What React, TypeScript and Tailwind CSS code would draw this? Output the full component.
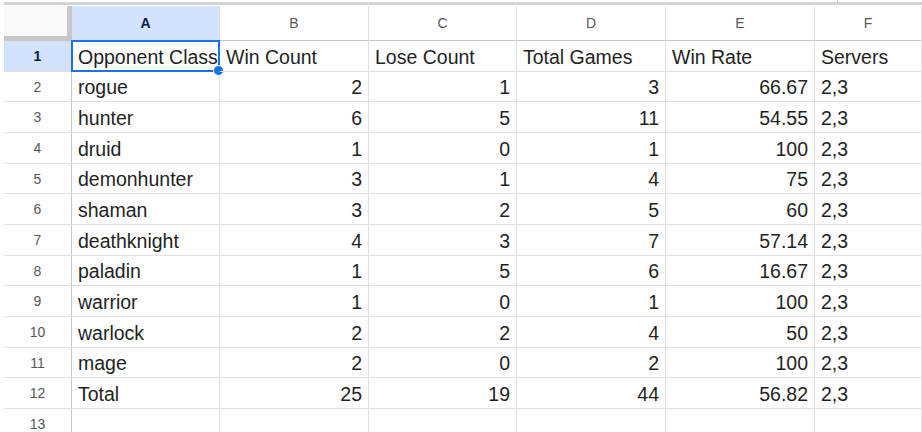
import React from "react";

interface rowType {
  name: string;
  win: number;
  lose: number;
  total: number;
  rate: string;
  servers: string;
}

const rows: rowType[] = [
  { name: "rogue", win: 2, lose: 1, total: 3, rate: "66.67", servers: "2,3" },
  { name: "hunter", win: 6, lose: 5, total: 11, rate: "54.55", servers: "2,3" },
  { name: "druid", win: 1, lose: 0, total: 1, rate: "100", servers: "2,3" },
  { name: "demonhunter", win: 3, lose: 1, total: 4, rate: "75", servers: "2,3" },
  { name: "shaman", win: 3, lose: 2, total: 5, rate: "60", servers: "2,3" },
  { name: "deathknight", win: 4, lose: 3, total: 7, rate: "57.14", servers: "2,3" },
  { name: "paladin", win: 1, lose: 5, total: 6, rate: "16.67", servers: "2,3" },
  { name: "warrior", win: 1, lose: 0, total: 1, rate: "100", servers: "2,3" },
  { name: "warlock", win: 2, lose: 2, total: 4, rate: "50", servers: "2,3" },
  { name: "mage", win: 2, lose: 0, total: 2, rate: "100", servers: "2,3" },
  { name: "Total", win: 25, lose: 19, total: 44, rate: "56.82", servers: "2,3" },
];

// row heights alternate so 12 rows come out at 368px like the screenshot
const heights = ["h-[31px]", "h-[30px]", "h-[31px]"];

const colWidths = ["w-[148px]", "w-[149px]", "w-[148px]", "w-[149px]", "w-[149px]", "flex-1"];
const letters = ["A", "B", "C", "D", "E", "F"];

const RowHeader = ({ n, active }: { n: number; active?: boolean }) => (
  <div
    className={`w-[68px] shrink-0 flex items-center justify-center border-r border-r-[#c7c7c7] border-b border-b-[#e1e1e1] text-[14px] ${
      active ? "bg-[#d3e3fd] font-bold text-[#041e49]" : "bg-white text-[#575757]"
    }`}
  >
    {n}
  </div>
);

const Cell = ({ idx, children, right }: { idx: number; children?: React.ReactNode; right?: boolean }) => (
  <div
    className={`${colWidths[idx]} shrink-0 flex items-end pb-[4px] px-[6px] border-r border-b border-[#e1e1e1] whitespace-nowrap overflow-visible ${
      right ? "justify-end" : "justify-start"
    }`}
  >
    {children}
  </div>
);

const App = () => {
  const header = ["Opponent Class", "Win Count", "Lose Count", "Total Games", "Win Rate", "Servers"];

  return (
    <div
      className="w-[922px] h-[432px] overflow-hidden bg-white pl-[4px] text-[#1f1f1f]"
      style={{ fontFamily: '"Liberation Sans", Arial, sans-serif' }}
    >
      {/* top bar line */}
      <div className="h-[6px] relative">
        <div className="absolute left-0 right-0 top-[2px] h-[3px] bg-[#d4d4d4]" />
        <div className="absolute left-[833px] top-0 h-[3px] w-px bg-[#c7c7c7]" />
      </div>

      {/* column letters */}
      <div className="flex h-[35px]">
        <div className="w-[68px] shrink-0 bg-[#f8f9fa] border-r-[5px] border-b-[5px] border-[#c7c7c7]" />
        {letters.map((l, i) => (
          <div
            key={l}
            className={`${colWidths[i]} shrink-0 flex items-center justify-center border-r border-r-[#e1e1e1] border-b border-b-[#c7c7c7] text-[14px] ${
              i === 0 ? "bg-[#d3e3fd] font-bold text-[#041e49]" : "bg-white text-[#575757]"
            }`}
          >
            {l}
          </div>
        ))}
      </div>

      <div className="text-[19.5px] leading-none">
        {/* row 1 headers */}
        <div className={`flex ${heights[0]}`}>
          <RowHeader n={1} active />
          {header.map((h, i) => (
            <div
              key={h}
              className={`${colWidths[i]} shrink-0 relative flex items-end pb-[4px] px-[6px] border-r border-b border-[#e1e1e1] whitespace-nowrap`}
            >
              {h}
              {i === 0 && (
                <div className="absolute -left-px -top-px -right-px -bottom-px border-2 border-[#1a73e8] pointer-events-none">
                  <div className="absolute -right-[6px] -bottom-[6px] w-[11px] h-[11px] rounded-full bg-[#1a73e8] border border-white" />
                </div>
              )}
            </div>
          ))}
        </div>

        {rows.map((r, i) => (
          <div key={r.name} className={`flex ${heights[(i + 1) % 3]}`}>
            <RowHeader n={i + 2} />
            <Cell idx={0}>{r.name}</Cell>
            <Cell idx={1} right>{r.win}</Cell>
            <Cell idx={2} right>{r.lose}</Cell>
            <Cell idx={3} right>{r.total}</Cell>
            <Cell idx={4} right>{r.rate}</Cell>
            <Cell idx={5}>{r.servers}</Cell>
          </div>
        ))}

        {/* row 13 empty */}
        <div className="flex h-[31px]">
          <RowHeader n={13} />
          {letters.map((l, i) => (
            <Cell key={l} idx={i} />
          ))}
        </div>
      </div>
    </div>
  );
};

export default App;
